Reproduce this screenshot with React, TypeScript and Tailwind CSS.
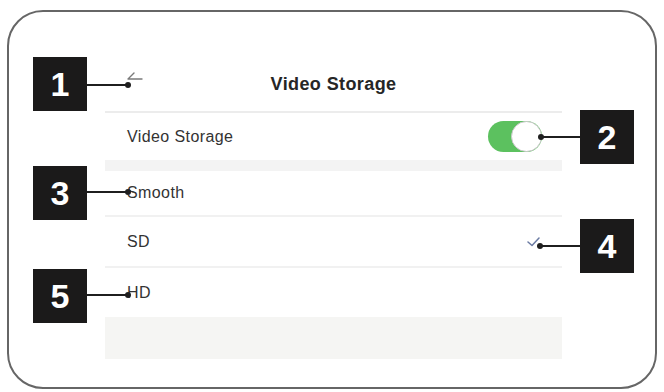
import React from "react";

const font = { fontFamily: '"Liberation Sans", Arial, sans-serif' };

function Callout({ n, box, line }: { n: string; box: string; line: string }) {
  return (
    <>
      <div className={`absolute h-[1.5px] bg-[#1f1f1f] ${line}`} />
      <div className={`absolute flex h-[54px] w-[54px] items-center justify-center bg-[#1b1a1a] text-[34px] font-bold leading-none text-white ${box}`}>
        {n}
      </div>
    </>
  );
}

function Dot({ pos }: { pos: string }) {
  return <div className={`absolute h-[6px] w-[6px] rounded-full bg-[#1f1f1f] ${pos}`} />;
}

export default function App() {
  return (
    <div className="relative h-[392px] w-[664px] overflow-hidden bg-white px-[7px] pt-[10px]" style={font}>
      <div className="h-[379px] rounded-[36px] border-2 border-[#666666] pl-[96px] pt-[45px]">
        <div className="w-[457px]">
          {/* Header */}
          <div className="relative flex h-[54px] items-center justify-center">
            <svg className="absolute left-[21px] top-[14px]" width="17" height="16" viewBox="0 0 17 16" fill="none">
              <path d="M8 2 L2 8 M2 8 L16 8" stroke="#7a7a7a" strokeWidth="1.4" strokeLinecap="round" />
            </svg>
            <span className="text-[18px] font-bold tracking-[0.4px] text-[#262626]">Video Storage</span>
          </div>
          <div className="h-[2px] bg-[#ececec]" />

          {/* Toggle row */}
          <div className="flex h-[47px] items-center justify-between pl-[22px] pr-[20px]">
            <span className="text-[16px] tracking-[0.4px] text-[#333333]">Video Storage</span>
            <div className="flex h-[31px] w-[54px] items-center justify-end rounded-full bg-[#5cc15f]">
              <div className="h-[31px] w-[31px] rounded-full border border-[#c9c9c9] bg-white" />
            </div>
          </div>
          <div className="h-[11px] bg-[#f3f3f3]" />

          {/* Quality options */}
          <div className="flex h-[44px] items-center pl-[22px] text-[16px] tracking-[0.4px] text-[#333333]">Smooth</div>
          <div className="h-[2px] bg-[#f1f1f1]" />
          <div className="flex h-[49px] items-center justify-between pl-[22px] pr-[22px] text-[16px] tracking-[0.4px] text-[#333333]">
            <span>SD</span>
            <svg width="13" height="10" viewBox="0 0 13 10" fill="none">
              <path d="M1 5 L5 8.5 L12 1" stroke="#6b7ba3" strokeWidth="1.5" strokeLinecap="round" strokeLinejoin="round" />
            </svg>
          </div>
          <div className="h-[2px] bg-[#f1f1f1]" />
          <div className="flex h-[49px] items-center pl-[22px] text-[16px] tracking-[0.4px] text-[#333333]">HD</div>
          <div className="h-[42px] bg-[#f5f5f3]" />
        </div>
      </div>

      {/* Annotation callouts */}
      <Callout n="1" box="left-[33px] top-[57px]" line="left-[87px] top-[84px] w-[41px]" />
      <Dot pos="left-[125px] top-[82px]" />
      <Callout n="2" box="left-[580px] top-[110px]" line="left-[541px] top-[136px] w-[39px]" />
      <Dot pos="left-[538px] top-[134px]" />
      <Callout n="3" box="left-[33px] top-[166px]" line="left-[87px] top-[191px] w-[41px]" />
      <Dot pos="left-[125px] top-[189px]" />
      <Callout n="4" box="left-[580px] top-[219px]" line="left-[540px] top-[245px] w-[40px]" />
      <Dot pos="left-[537px] top-[243px]" />
      <Callout n="5" box="left-[33px] top-[269px]" line="left-[87px] top-[294px] w-[41px]" />
      <Dot pos="left-[125px] top-[292px]" />
    </div>
  );
}
